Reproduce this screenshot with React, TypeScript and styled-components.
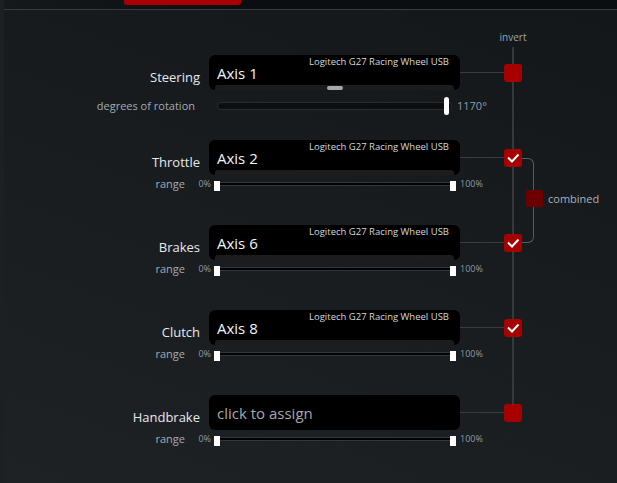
import React from 'react';
import styled, { createGlobalStyle } from 'styled-components';

const RAIL = '#35393c';
const GRID = '205px 251px 44px 18px 1fr';

const GlobalStyle = createGlobalStyle`
  html, body {
    margin: 0;
    padding: 0;
    background: #171b1e;
    overflow: hidden;
  }
  body {
    font-family: 'Open Sans', 'Noto Sans', sans-serif;
  }
`;

const Page = styled.div`
  display: flex;
  width: 617px;
  height: 483px;
  background: linear-gradient(200deg, #13171a 0%, #181c1f 45%, #1f2225 100%);
`;

const Edge = styled.div`
  flex: none;
  width: 4px;
  background: #1c2023;
`;

const Main = styled.div`
  flex: 1;
  min-width: 0;
  display: flex;
  flex-direction: column;
`;

const TopBar = styled.div`
  height: 9px;
  border-bottom: 1px solid #383c40;
  background: linear-gradient(90deg, #15191c, #0b0e10 40%, #0b0e10);
`;

const Tab = styled.div`
  margin-left: 120px;
  width: 117px;
  height: 5px;
  background: #a80000;
  border-radius: 0 0 3px 3px;
`;

const Content = styled.div`
  display: flex;
  flex-direction: column;
  padding-top: 21px;
`;

const InvertHead = styled.div`
  display: grid;
  grid-template-columns: ${GRID};
`;

const InvertCell = styled.div`
  grid-column: 4;
  display: flex;
  flex-direction: column;
  align-items: center;
`;

const InvertText = styled.span`
  font-size: 10px;
  line-height: 12px;
  color: #9aa3ab;
  white-space: nowrap;
`;

const RailStub = styled.div`
  width: 2px;
  height: 8px;
  margin-top: 4px;
  background: ${RAIL};
`;

const Row = styled.div`
  display: grid;
  grid-template-columns: ${GRID};
  grid-template-rows: 35px 50px;
`;

const Label = styled.div`
  grid-column: 1;
  grid-row: 1;
  align-self: end;
  padding: 0 9px 4px 0;
  text-align: right;
  font-size: 13px;
  line-height: 18px;
  color: #e6e9ec;
`;

const AxisBox = styled.div`
  grid-column: 2;
  grid-row: 1;
  position: relative;
  display: flex;
  flex-direction: column;
  padding-top: 9px;
  background: #000;
  border-radius: 6px;
`;

const AxisName = styled.div<{ $muted?: boolean }>`
  padding-left: 8px;
  font-size: 15px;
  line-height: 18px;
  color: ${(p) => (p.$muted ? '#a4a8ac' : '#f2f4f6')};
`;

const DeviceName = styled.span`
  position: absolute;
  top: 1px;
  right: 11px;
  font-size: 9.5px;
  line-height: 12px;
  color: #d3d9de;
  white-space: nowrap;
`;

const AxisBar = styled.div`
  position: relative;
  margin: auto 6px 0;
  height: 5px;
  background: #1c1c1c;
  border-radius: 3px 3px 0 0;
`;

const AxisThumb = styled.div`
  position: absolute;
  top: 1px;
  width: 16px;
  height: 4px;
  background: #a8a8a8;
  border-radius: 2px;
`;

const Link = styled.div`
  grid-column: 3;
  grid-row: 1;
  align-self: center;
  height: 1px;
  background: #383c3f;
`;

const CheckCell = styled.div<{ $end?: boolean }>`
  grid-column: 4;
  grid-row: 1;
  display: flex;
  align-items: center;
  justify-content: center;
  background: linear-gradient(${RAIL}, ${RAIL}) center top / 2px ${(p) => (p.$end ? '50%' : '100%')} no-repeat;
`;

const RailCell = styled.div`
  grid-column: 4;
  grid-row: 2;
  background: linear-gradient(${RAIL}, ${RAIL}) center top / 2px 100% no-repeat;
`;

const Checkbox = styled.div`
  width: 18px;
  height: 18px;
  display: flex;
  align-items: center;
  justify-content: center;
  background: #a60000;
  border-radius: 3px;
`;

const CombineCell = styled.div`
  grid-column: 5;
  grid-row: 1;
  position: relative;
`;

const Bracket = styled.div`
  position: absolute;
  left: 0;
  top: 50%;
  width: 12px;
  height: 85px;
  box-sizing: border-box;
  border: 1px solid #585c60;
  border-left: none;
  border-radius: 0 6px 6px 0;
`;

const CombinedTag = styled.div`
  position: absolute;
  left: 4px;
  top: calc(50% + 32px);
  display: flex;
  align-items: center;
  gap: 5px;
`;

const CombinedBox = styled.div`
  width: 17px;
  height: 17px;
  background: #6c0000;
  border-radius: 2px;
`;

const CombinedText = styled.span`
  font-size: 11px;
  color: #a9b1b8;
`;

const SubRow = styled.div<{ $top: number }>`
  grid-column: 1 / 4;
  grid-row: 2;
  display: flex;
  align-items: flex-start;
  padding-top: ${(p) => p.$top}px;
`;

const SubLabel = styled.div<{ $width: number }>`
  flex: none;
  width: ${(p) => p.$width}px;
  text-align: right;
  font-size: 11px;
  line-height: 18px;
  color: #a3abb1;
`;

const RangeLabel = styled(SubLabel)`
  line-height: 14px;
`;

const RotationSlider = styled.div`
  position: relative;
  flex: none;
  width: 235px;
  height: 18px;
  margin-left: 22px;
`;

const RotationTrack = styled.div`
  margin-top: 5px;
  height: 8px;
  box-sizing: border-box;
  background: #0c0e10;
  border: 1px solid #2a2d30;
  border-radius: 4px;
`;

const RotationThumb = styled.div`
  position: absolute;
  top: 0;
  width: 5px;
  height: 18px;
  background: #fff;
  border-radius: 3px;
`;

const Value = styled.span`
  margin-left: 5px;
  font-size: 11px;
  line-height: 18px;
  color: #8e9ea8;
`;

const Percent = styled.span<{ $width?: number }>`
  flex: none;
  width: ${(p) => (p.$width ? `${p.$width}px` : 'auto')};
  margin-left: ${(p) => (p.$width ? 0 : 4)}px;
  text-align: right;
  font-size: 9px;
  line-height: 14px;
  color: #8a9ba7;
`;

const RangeSlider = styled.div`
  position: relative;
  flex: none;
  width: 242px;
  height: 10px;
  margin: 4px 0 0 3px;
`;

const RangeLine = styled.div`
  margin-top: 1px;
  height: 4px;
  box-sizing: border-box;
  background: #000;
  border-top: 1px solid #33373a;
  border-bottom: 1px solid #33373a;
`;

const RangeThumb = styled.div`
  position: absolute;
  top: 0;
  width: 6px;
  height: 10px;
  background: #fff;
`;

const Check = () => (
  <svg width='18' height='18' viewBox='0 0 18 18'>
    <polyline points='4,8.5 8,12.5 14.5,5.5' fill='none' stroke='#fff' strokeWidth='2' />
  </svg>
);

interface Control {
  name: string;
  axis?: string;
  checked: boolean;
  combine?: boolean;
}

const controls: Control[] = [
  { name: 'Throttle', axis: 'Axis 2', checked: true, combine: true },
  { name: 'Brakes', axis: 'Axis 6', checked: true },
  { name: 'Clutch', axis: 'Axis 8', checked: true },
  { name: 'Handbrake', checked: false }
];

const DEVICE = 'Logitech G27 Racing Wheel USB';

const Range: React.FC<{ min: number; max: number }> = ({ min, max }) => (
  <SubRow $top={2}>
    <RangeLabel $width={181}>range</RangeLabel>
    <Percent $width={26}>{min}%</Percent>
    <RangeSlider>
      <RangeLine />
      <RangeThumb style={{ left: (min / 100) * 236 }} />
      <RangeThumb style={{ left: (max / 100) * 236 }} />
    </RangeSlider>
    <Percent>{max}%</Percent>
  </SubRow>
);

const App: React.FC = () => {
  const rotation = 1170;
  const steerValue = 0.47;

  return (
    <>
      <GlobalStyle />
      <Page>
        <Edge />
        <Main>
          <TopBar>
            <Tab />
          </TopBar>
          <Content>
            <InvertHead>
              <InvertCell>
                <InvertText>invert</InvertText>
                <RailStub />
              </InvertCell>
            </InvertHead>

            <Row>
              <Label>Steering</Label>
              <AxisBox>
                <DeviceName>{DEVICE}</DeviceName>
                <AxisName>Axis 1</AxisName>
                <AxisBar>
                  <AxisThumb style={{ left: `${steerValue * 100}%` }} />
                </AxisBar>
              </AxisBox>
              <Link />
              <CheckCell>
                <Checkbox />
              </CheckCell>
              <RailCell />
              <SubRow $top={7}>
                <SubLabel $width={191}>degrees of rotation</SubLabel>
                <RotationSlider>
                  <RotationTrack />
                  <RotationThumb style={{ left: (rotation / 1185) * 230 }} />
                </RotationSlider>
                <Value>{rotation}°</Value>
              </SubRow>
            </Row>

            {controls.map((c, i) => {
              const last = i === controls.length - 1;
              return (
                <Row key={c.name}>
                  <Label>{c.name}</Label>
                  <AxisBox>
                    {c.axis && <DeviceName>{DEVICE}</DeviceName>}
                    <AxisName $muted={!c.axis}>{c.axis ?? 'click to assign'}</AxisName>
                    {c.axis && <AxisBar />}
                  </AxisBox>
                  <Link />
                  <CheckCell $end={last}>
                    <Checkbox>{c.checked && <Check />}</Checkbox>
                  </CheckCell>
                  {!last && <RailCell />}
                  {c.combine && (
                    <CombineCell>
                      <Bracket />
                      <CombinedTag>
                        <CombinedBox />
                        <CombinedText>combined</CombinedText>
                      </CombinedTag>
                    </CombineCell>
                  )}
                  <Range min={0} max={100} />
                </Row>
              );
            })}
          </Content>
        </Main>
      </Page>
    </>
  );
};

export default App;
